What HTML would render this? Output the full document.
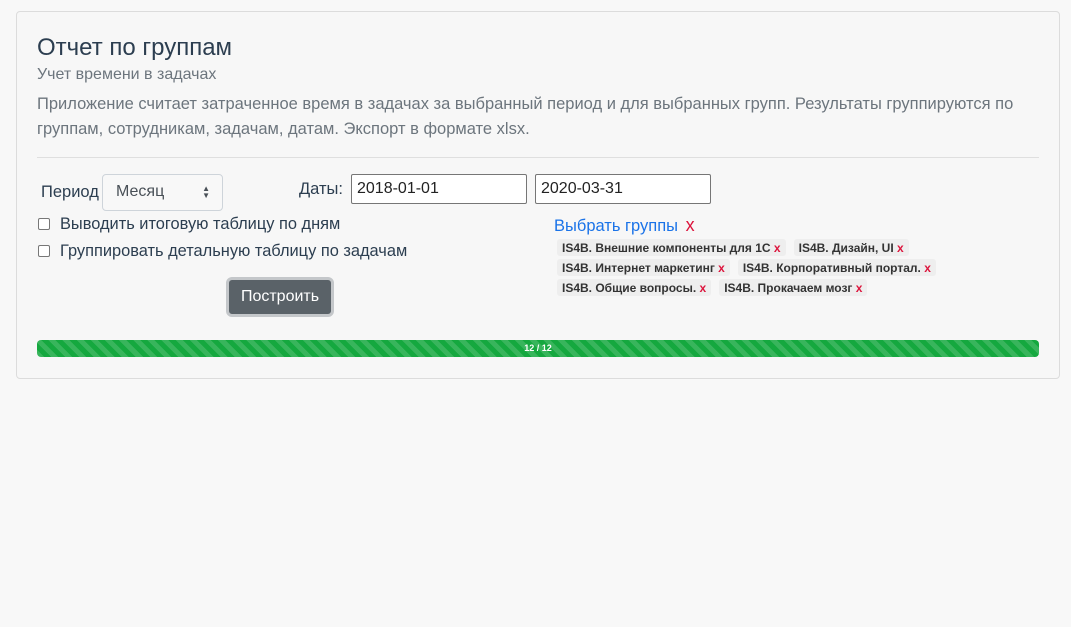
<!DOCTYPE html>
<html><head><meta charset="utf-8"><style>
*{box-sizing:border-box;margin:0;padding:0}
body{width:1071px;height:627px;background:#f8f8f8;font-family:"Liberation Sans",sans-serif;color:#2c3e50;position:relative;overflow:hidden}
.card{position:absolute;left:16px;top:11px;width:1044px;height:368px;border:1px solid #dcdcdc;border-radius:4px;background:#f7f7f7}
.a{position:absolute;white-space:nowrap}
h1{font-weight:400;font-size:24px;color:#2c3e50}
.sub{font-size:16px;color:#6c757d}
.p{font-size:16.5px;color:#6c757d;line-height:25px}
.hr{position:absolute;left:37px;top:157px;width:1002px;height:1px;background:#dfdfdf}
.sel{left:102px;top:174px;width:121px;height:37px;border:1px solid #ced4da;border-radius:4px;background:#f8f8f8;font-size:16px;padding:8px 13px;color:#495057}
.inp{height:30px;border:1px solid #767676;border-radius:2px;background:#fff;font-size:16px;padding:5px 5px;color:#222}
.cb{width:12px;height:12px;border:1px solid #777;border-radius:2px;background:#fff}
.btn{left:226px;top:277px;width:108px;height:40px;border:3px solid #c4c7ca;border-radius:6px;background:#5a6268;color:#fff;font-size:16px;text-align:center;line-height:34px}
.tag{display:inline-block;background:#eeeeee;border-radius:3px;font-size:12px;font-weight:bold;padding:2px 5px;margin:0 8px 2px 0;color:#333;height:17px;line-height:14px}
.tag b{color:#dc143c}
.prog{left:37px;top:340px;width:1002px;height:17px;border-radius:4px;background-color:#15a83f;background-image:repeating-linear-gradient(45deg,rgba(255,255,255,.15) 0 5px,transparent 5px 10px);color:#fff;font-size:9px;font-weight:bold;text-align:center;line-height:17px}
</style></head><body>
<div class="card"></div>
<h1 class="a" style="left:37px;top:34px">Отчет по группам</h1>
<div class="a sub" style="left:37px;top:66px">Учет времени в задачах</div>
<div class="a p" style="left:37px;top:92px">Приложение считает затраченное время в задачах за выбранный период и для выбранных групп. Результаты группируются по<br>группам, сотрудникам, задачам, датам. Экспорт в формате xlsx.</div>
<div class="hr"></div>
<div class="a" style="left:41px;top:183px;font-size:16.5px">Период</div>
<div class="a sel">Месяц<span style="position:absolute;right:12px;top:10px;font-size:8px;line-height:7px">▲<br>▼</span></div>
<div class="a" style="left:299px;top:180px;font-size:16.5px">Даты:</div>
<div class="a inp" style="left:351px;top:174px;width:176px">2018-01-01</div>
<div class="a inp" style="left:535px;top:174px;width:176px">2020-03-31</div>
<div class="a cb" style="left:38px;top:218px"></div>
<div class="a" style="left:60px;top:215px;font-size:16.4px">Выводить итоговую таблицу по дням</div>
<div class="a cb" style="left:38px;top:245px"></div>
<div class="a" style="left:60px;top:242px;font-size:16.4px">Группировать детальную таблицу по задачам</div>
<div class="a btn">Построить</div>
<div class="a" style="left:554px;top:215px;font-size:16.5px;color:#1a73e8">Выбрать группы <span style="color:#dc143c;font-size:18px;margin-left:3px">x</span></div>
<div class="a" style="left:557px;top:238px;width:480px;white-space:normal;line-height:19.5px">
<span class="tag">IS4B. Внешние компоненты для 1С <b>x</b></span><span class="tag">IS4B. Дизайн, UI <b>x</b></span><br>
<span class="tag">IS4B. Интернет маркетинг <b>x</b></span><span class="tag">IS4B. Корпоративный портал. <b>x</b></span><br>
<span class="tag">IS4B. Общие вопросы. <b>x</b></span><span class="tag">IS4B. Прокачаем мозг <b>x</b></span>
</div>
<div class="a prog">12 / 12</div>
</body></html>
